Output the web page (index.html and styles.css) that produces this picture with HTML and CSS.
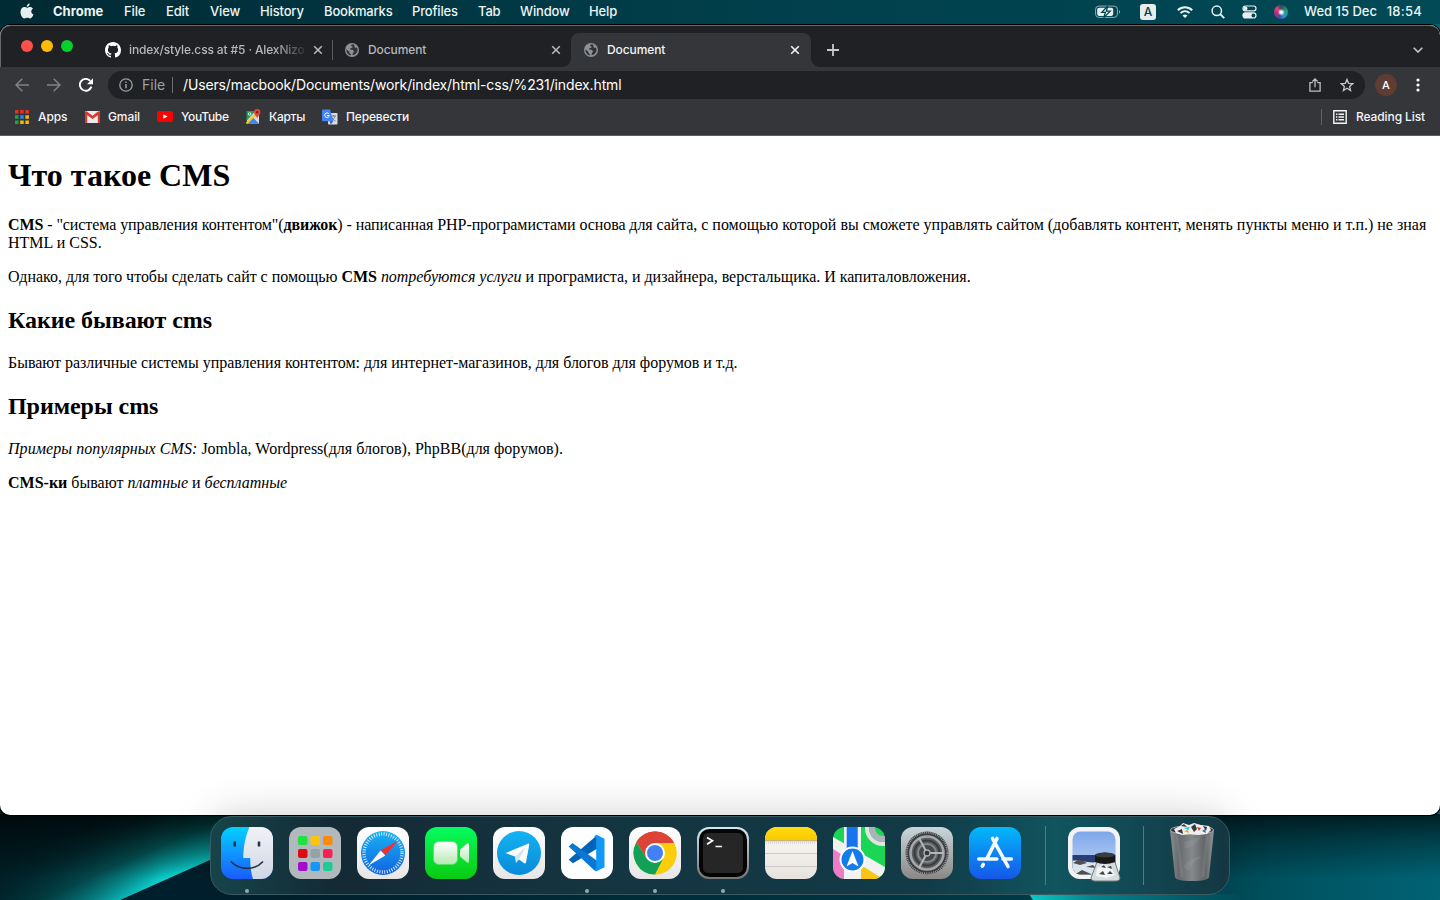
FILE: index.html
```html
<!DOCTYPE html>
<html lang="ru">
<head>
<meta charset="utf-8">
<title>Document</title>
<link rel="stylesheet" href="styles.css">
</head>
<body>
<svg width="0" height="0" class="defs">
  <defs>
    <linearGradient id="finderBlue" x1="0" y1="0" x2="0" y2="1"><stop offset="0" stop-color="#03d1fd"/><stop offset="1" stop-color="#1a5cff"/></linearGradient>
    <linearGradient id="finderWhite" x1="0" y1="0" x2="0" y2="1"><stop offset="0" stop-color="#f1f2f6"/><stop offset="1" stop-color="#cfd7e5"/></linearGradient>
    <linearGradient id="white" x1="0" y1="0" x2="0" y2="1"><stop offset="0" stop-color="#fff"/><stop offset="1" stop-color="#e6e6e6"/></linearGradient>
    <linearGradient id="safari" x1="0" y1="0" x2="0" y2="1"><stop offset="0" stop-color="#18b2f4"/><stop offset="1" stop-color="#1362df"/></linearGradient>
    <linearGradient id="green" x1="0" y1="0" x2="0" y2="1"><stop offset="0" stop-color="#05fc5e"/><stop offset="1" stop-color="#0acb11"/></linearGradient>
    <linearGradient id="camera" x1="0" y1="0" x2="0" y2="1"><stop offset="0" stop-color="#fff"/><stop offset="1" stop-color="#b6e9b5"/></linearGradient>
    <linearGradient id="tg" x1="0" y1="0" x2="0" y2="1"><stop offset="0" stop-color="#12b4f2"/><stop offset="1" stop-color="#0a89d8"/></linearGradient>
    <linearGradient id="yellow" x1="0" y1="0" x2="0" y2="1"><stop offset="0" stop-color="#ffdc10"/><stop offset="1" stop-color="#fcc800"/></linearGradient>
    <linearGradient id="note" x1="0" y1="0" x2="0" y2="1"><stop offset="0" stop-color="#fbfaf8"/><stop offset="1" stop-color="#e7e2dd"/></linearGradient>
    <linearGradient id="rim" x1="0" y1="0" x2="0" y2="1"><stop offset="0" stop-color="#d3eaf0"/><stop offset="1" stop-color="#77736f"/></linearGradient>
    <linearGradient id="prefs" x1="0" y1="0" x2="0" y2="1"><stop offset="0" stop-color="#c8d6dc"/><stop offset="1" stop-color="#8b8885"/></linearGradient>
    <linearGradient id="store" x1="0" y1="0" x2="0" y2="1"><stop offset="0" stop-color="#03b8fb"/><stop offset="1" stop-color="#1656e8"/></linearGradient>
    <linearGradient id="sky" x1="0" y1="0" x2="0" y2="1"><stop offset="0" stop-color="#76a2e8"/><stop offset="1" stop-color="#c9dcf8"/></linearGradient>
    <linearGradient id="can" x1="0" y1="0" x2="1" y2="0"><stop offset="0" stop-color="#8b8f91"/><stop offset=".2" stop-color="#666a6c"/><stop offset=".5" stop-color="#85898b"/><stop offset=".8" stop-color="#616567"/><stop offset="1" stop-color="#94989a"/></linearGradient>
    <linearGradient id="glow" gradientUnits="userSpaceOnUse" x1="165" y1="80" x2="132" y2="5"><stop offset="0" stop-color="#0bd4d4"/><stop offset=".14" stop-color="#08a9a9"/><stop offset=".4" stop-color="#045f61"/><stop offset=".75" stop-color="#013338"/><stop offset="1" stop-color="#00222a"/></linearGradient>
    <linearGradient id="leftDark" gradientUnits="userSpaceOnUse" x1="0" y1="0" x2="200" y2="0"><stop offset="0" stop-color="#001b22" stop-opacity=".75"/><stop offset=".8" stop-color="#001b22" stop-opacity="0"/></linearGradient>
    <linearGradient id="floor" x1="0" y1="0" x2="1" y2="0"><stop offset="0" stop-color="#001d2b"/><stop offset=".15" stop-color="#00202e"/><stop offset=".7" stop-color="#003f4c"/><stop offset=".85" stop-color="#004a57"/><stop offset="1" stop-color="#016374"/></linearGradient>
    <linearGradient id="wedge" x1="0" y1="0" x2="1" y2="0"><stop offset="0" stop-color="#0be0dd"/><stop offset=".3" stop-color="#07909a"/><stop offset="1" stop-color="#004d5a"/></linearGradient>
    <linearGradient id="shade" x1="0" y1="0" x2="0" y2="1"><stop offset="0" stop-color="#000" stop-opacity=".68"/><stop offset=".3" stop-color="#000" stop-opacity=".36"/><stop offset=".75" stop-color="#000" stop-opacity="0"/></linearGradient>
    <clipPath id="tile"><rect width="52" height="52" rx="12"/></clipPath>
    <symbol id="globe" viewBox="0 0 14 14"><circle cx="7" cy="7" r="7" fill="#8b9196"/><path d="M6.800 1.200 5.900 3l1.700.5-.2 1.300-2 .5-.3 1.300 2.400.2 1.800 1.700-1 .8-.9 2.800C10.200 12 12.500 9.900 12.500 7c0-.8-.2-1.600-.6-2.400l-1.500.3-1.200-1.600.2-1.500zM1.300 6.300c-.1 3 1.700 5.600 4.400 6.200l.2-1.400-1.700-1.200.2-1.200z" fill="#303236"/></symbol>
    <symbol id="cross" viewBox="0 0 10 10"><path d="M1.200 1.200 8.800 8.800M8.800 1.200 1.200 8.800" stroke="currentColor" stroke-width="1.600"/></symbol>
  </defs>
</svg>

<div class="desktop">
  <svg class="wallpaper" viewBox="0 0 1440 100" width="1440" height="100">
    <rect width="1440" height="100" fill="url(#floor)"/>
    <path d="M0 0H345L120 100H0z" fill="url(#glow)"/>
    <path d="M0 0H345L120 100H0z" fill="url(#leftDark)"/>
    <path d="M1029 94H1240V100H1033z" fill="url(#wedge)"/>
    <rect y="14" width="1440" height="86" fill="url(#shade)"/>
  </svg>

  <header class="menubar">
    <svg class="apple" width="14" height="17" viewBox="0 0 14 17"><path fill="#e8eeef" d="M9.700.6c.1 1.700-1.300 3.300-2.900 3.200C6.600 2.300 8 .8 9.700.6zM7 4.800c.7 0 1.600-.8 3-.8 1.200 0 2.300.6 3 1.500-2.500 1.500-2.100 4.900.5 5.900-.6 1.600-1.900 4-3.300 4-1.100 0-1.500-.7-2.900-.7s-1.900.7-2.900.7C2.600 15.400.5 12 .5 8.900.5 5.900 2.400 4.100 4.400 4.100c1.200 0 2 .7 2.600.7z"/></svg>
    <nav class="menus">
      <span class="app">Chrome</span><span>File</span><span>Edit</span><span>View</span><span>History</span><span>Bookmarks</span><span>Profiles</span><span>Tab</span><span>Window</span><span>Help</span>
    </nav>
    <div class="status">
      <svg width="26" height="14" viewBox="0 0 26 14"><rect x=".6" y="1.100" width="21.800" height="11.300" rx="3.200" fill="none" stroke="#8faeb4"/><rect x="2.200" y="2.700" width="16" height="8.200" rx="1.800" fill="#e8eeef"/><path d="M12.800 1 6.800 7.400h3.600L8.800 12.600l6.400-6.500h-3.800z" fill="#e8eeef" stroke="#024652" stroke-width="1.300"/><path d="M24 5v3.600c1.400-.5 1.400-3.100 0-3.600z" fill="#8faeb4"/></svg>
      <span class="lang">A</span>
      <svg width="16" height="12" viewBox="0 0 16 12" fill="none" stroke="#edf2f3" stroke-width="2"><path d="M.8 4.200C4.900.2 11.100.2 15.200 4.200M3.500 7.100c2.600-2.500 6.400-2.500 9 0"/><path d="M8 12 5.500 9.400c1.400-1.300 3.600-1.300 5 0z" fill="#edf2f3" stroke="none"/></svg>
      <svg width="14" height="14" viewBox="0 0 14 14" fill="none" stroke="#edf2f3" stroke-width="1.500"><circle cx="5.800" cy="5.800" r="4.700"/><path d="m9.200 9.200 4 4" stroke-width="1.900"/></svg>
      <svg width="15" height="14" viewBox="0 0 15 14"><rect x="1" y="1" width="13" height="4.800" rx="2.400" fill="none" stroke="#e8eeef" stroke-width="1.200"/><circle cx="3.500" cy="3.400" r="2" fill="#e8eeef"/><rect x=".4" y="7.300" width="14.200" height="6.300" rx="3.100" fill="#e8eeef"/><circle cx="11.400" cy="10.500" r="1.900" fill="#024652"/></svg>
      <span class="siri"></span>
      <span class="clock"><span>Wed 15 Dec</span><span class="time">18:54</span></span>
    </div>
  </header>

  <section class="window">
    <div class="tabs">
      <div class="lights"><i class="red"></i><i class="amber"></i><i class="lime"></i></div>
      <div class="tab first">
        <svg width="16" height="16" viewBox="0 0 16 16"><path fill="#fff" d="M8 0C3.580 0 0 3.580 0 8c0 3.540 2.290 6.530 5.470 7.590.4.070.55-.17.55-.38 0-.19-.01-.82-.01-1.490-2.010.37-2.530-.49-2.690-.94-.09-.23-.48-.94-.82-1.130-.28-.15-.68-.52-.01-.53.63-.01 1.080.58 1.230.82.72 1.210 1.870.87 2.330.66.07-.52.28-.87.51-1.070-1.780-.2-3.640-.89-3.640-3.950 0-.87.31-1.590.82-2.150-.08-.2-.36-1.020.08-2.120 0 0 .67-.21 2.200.82a7.600 7.600 0 0 1 4 0c1.530-1.040 2.200-.82 2.200-.82.44 1.100.16 1.920.08 2.120.51.56.82 1.270.82 2.150 0 3.070-1.870 3.750-3.650 3.950.29.25.54.73.54 1.480 0 1.070-.01 1.930-.01 2.200 0 .21.150.46.550.38A8.010 8.010 0 0 0 16 8c0-4.420-3.580-8-8-8z"/></svg>
        <span class="title fade">index/style.css at #5 · AlexNizo</span>
        <svg class="close" width="10" height="10"><use href="#cross"/></svg>
      </div>
      <div class="tab second">
        <svg width="14" height="14"><use href="#globe"/></svg>
        <span class="title">Document</span>
        <svg class="close" width="10" height="10"><use href="#cross"/></svg>
      </div>
      <div class="tab active">
        <svg width="14" height="14"><use href="#globe"/></svg>
        <span class="title">Document</span>
        <svg class="close" width="10" height="10"><use href="#cross"/></svg>
      </div>
      <svg class="plus" width="12" height="12" viewBox="0 0 12 12"><path d="M6 0v12M0 6h12" stroke="#c8cacd" stroke-width="1.800"/></svg>
      <svg class="chevron" width="10" height="6" viewBox="0 0 10 6"><path d="m.7.700 4.300 4.300L9.300.7" fill="none" stroke="#c4c7ca" stroke-width="1.600"/></svg>
    </div>

    <div class="toolbar">
      <svg width="14" height="14" viewBox="0 0 14 14" fill="none" stroke="#7f8286" stroke-width="1.500"><path d="M14 7H1M7.300.700 1 7l6.300 6.300"/></svg>
      <svg width="14" height="14" viewBox="0 0 14 14" fill="none" stroke="#7f8286" stroke-width="1.500"><path d="M0 7h13M6.700.700 13 7l-6.300 6.300"/></svg>
      <svg width="14" height="14" viewBox="0 0 14 14"><path d="M12.400 8.600A5.900 5.900 0 1 1 11.200 2.900" fill="none" stroke="#fff" stroke-width="1.900"/><path d="M14 .2v6H8z" fill="#fff"/></svg>
      <div class="omnibox">
        <svg width="14" height="14" viewBox="0 0 14 14"><circle cx="7" cy="7" r="6.200" fill="none" stroke="#9aa0a6" stroke-width="1.300"/><path d="M7 6v4.300M7 3.400v1.500" stroke="#9aa0a6" stroke-width="1.500"/></svg>
        <span class="scheme">File</span>
        <span class="url">/Users/macbook/Documents/work/index/html-css/%231/index.html</span>
        <svg class="share" width="12" height="14" viewBox="0 0 12 14" fill="none" stroke="#bcbfc2" stroke-width="1.300"><path d="M3.800 4.700H.9v8.500h10.200V4.700H8.200M6 9.200V1M3.400 3.500 6 .9l2.600 2.600"/></svg>
        <svg width="14" height="14" viewBox="0 0 14 14" fill="none" stroke="#c3c5c8" stroke-width="1.300"><path d="m7 1.400 1.600 3.900 4.200.3-3.200 2.800 1 4.100L7 10.300l-3.600 2.200 1-4.100L1.200 5.600l4.200-.3z"/></svg>
      </div>
      <span class="avatar">A</span>
      <svg width="4" height="14" viewBox="0 0 4 14" fill="#fff"><circle cx="2" cy="2" r="1.600"/><circle cx="2" cy="7" r="1.600"/><circle cx="2" cy="12" r="1.600"/></svg>
    </div>

    <div class="bookmarks">
      <svg width="14" height="14" viewBox="0 0 14 14"><path d="M0 0h3.500v3.500H0zM5.200 0h3.500v3.500H5.200zM10.400 0h3.500v3.500h-3.500z" fill="#ea3023"/><path d="M0 5.200h3.500v3.500H0z" fill="#1ea446"/><path d="M5.200 5.200h3.500v3.500H5.200z" fill="#2d85f0"/><path d="M10.400 5.200h3.500v3.500h-3.500z" fill="#f9b90c"/><path d="M0 10.400h3.500v3.500H0z" fill="#1ea446"/><path d="M5.200 10.400h3.500v3.500H5.200zM10.400 10.400h3.500v3.500h-3.500z" fill="#f9b90c"/></svg>
      <span class="apps">Apps</span>
      <svg width="15" height="12" viewBox="0 0 15 12"><rect width="15" height="12" rx="1.300" fill="#ececec"/><path d="M0 1.200V11q0 1 1 1h1.200V4.200L7.500 8l5.300-3.800V12H14q1 0 1-1V1.200Q14.300-.4 13 .4L7.500 4.800 2 .4Q.700-.4 0 1.200z" fill="#db3a30"/></svg>
      <span class="gmail">Gmail</span>
      <svg width="16" height="11" viewBox="0 0 16 11"><rect width="16" height="11" rx="2.600" fill="#f00"/><path d="m6.300 3.200 4.300 2.300-4.300 2.300z" fill="#fff"/></svg>
      <span class="youtube">YouTube</span>
      <svg width="15" height="15" viewBox="0 0 15 15"><path d="M1 2h12v12.500H1z" fill="#ddd"/><path d="M.5 2h9L.5 12z" fill="#1d9d58"/><path d="m7 8.500 6 6H1z" fill="#4285f4"/><path d="m9 6-8.500 8.500" stroke="#fbc62d" stroke-width="2"/><path d="M11.200 9.800C10.900 7.200 8 6.200 8 3.300a3.200 3.200 0 0 1 6.400 0c0 2.900-2.900 3.900-3.200 6.500z" fill="#e84335"/><circle cx="11.200" cy="3.300" r="1.200" fill="#7c1d16"/><circle cx="3.600" cy="5" r="1.300" fill="none" stroke="#fff" stroke-width=".8"/></svg>
      <span class="maps">Карты</span>
      <svg width="16" height="16" viewBox="0 0 16 16"><rect x="6" y="4" width="9.500" height="11.500" rx="1" fill="#dadce0"/><path d="M9 7h5M11.500 6v1M13 7c-.5 2-1.800 3.800-4 5M10 8.500c.7 1.700 2 3 3.500 3.500" fill="none" stroke="#68818c" stroke-width="1"/><path d="M1 .5h7l3.400 11.800H1q-1 0-1-1V1.500q0-1 1-1z" fill="#4285f4"/><path d="m7.500 12.300 1.200 3 2.700-3z" fill="#3550bd"/><path d="M6.800 4.700a2.300 2.300 0 1 0 .5 1.800H5.200" fill="none" stroke="#fff" stroke-width="1"/></svg>
      <span class="translate">Перевести</span>
      <i class="rule"></i>
      <svg width="14" height="14" viewBox="0 0 14 14" fill="none" stroke="#f4f4f4" stroke-width="1.400"><path d="M.8.800h12.400v12.400H.8zM5.500 4.200H11M5.500 7H11M5.500 9.800H11M3 4.200h1.400M3 7h1.400M3 9.800h1.400"/></svg>
      <span class="reading">Reading List</span>
    </div>

    <main class="page">
      <h1>Что такое CMS</h1>
      <p><span class="tight"><b>CMS</b> - "система управления контентом"(<b>движок</b>) - написанная PHP-програмистами основа для сайта,</span> с помощью которой вы сможете управлять сайтом (добавлять контент, менять пункты меню и т.п.) не зная HTML и CSS.</p>
      <p class="snug">Однако, для того чтобы сделать сайт с помощью <b>CMS</b> <i>потребуются услуги</i> и програмиста, и дизайнера, верстальщика. И капиталовложения.</p>
      <h2>Какие бывают cms</h2>
      <p class="snug">Бывают различные системы управления контентом: для интернет-магазинов, для блогов для форумов и т.д.</p>
      <h2>Примеры cms</h2>
      <p><i class="wide">Примеры популярных CMS:</i> Jombla, Wordpress(для блогов), PhpBB(для форумов).</p>
      <p><b>CMS-ки</b> бывают <i>платные</i> и <i>бесплатные</i></p>
    </main>
  </section>

  <footer class="dock">
    <div class="icon running"><svg viewBox="0 0 52 52"><g clip-path="url(#tile)"><rect width="52" height="52" fill="url(#finderBlue)"/><path d="M28.500 0C24.500 9 22.500 19 22.200 31h7c0 8 .8 15 2.800 21h20V0z" fill="url(#finderWhite)"/></g><path d="M13.700 14.500v5M38 14.500v5" stroke="#26333c" stroke-width="2.500"/><path d="M10.500 35c8 8.500 23 8.500 31 0" fill="none" stroke="#26333c" stroke-width="1.700" stroke-linecap="round"/></svg></div>
    <div class="icon"><svg viewBox="0 0 52 52"><rect width="52" height="52" rx="12" fill="#b1b9bc"/><g><rect x="9" y="9" width="9.500" height="9" rx="2" fill="#1de33c"/><rect x="21.500" y="9" width="9.500" height="9" rx="2" fill="#fcc40c"/><rect x="34" y="9" width="9.500" height="9" rx="2" fill="#fb890c"/><rect x="9" y="22" width="9.500" height="9" rx="2" fill="#dc0b14"/><rect x="21.500" y="22" width="9.500" height="9" rx="2" fill="#96a2a8"/><rect x="34" y="22" width="9.500" height="9" rx="2" fill="#f62255"/><rect x="9" y="35" width="9.500" height="9" rx="2" fill="#a30ccb"/><rect x="21.500" y="35" width="9.500" height="9" rx="2" fill="#1597fa"/><rect x="34" y="35" width="9.500" height="9" rx="2" fill="#20cb92"/></g></svg></div>
    <div class="icon"><svg viewBox="0 0 52 52"><rect width="52" height="52" rx="12" fill="url(#white)"/><circle cx="26" cy="26" r="22" fill="url(#safari)"/><circle cx="26" cy="26" r="19" fill="none" stroke="#e2f1fb" stroke-width="3.400" stroke-dasharray=".9 1.590"/><path d="M41 13.500 23.600 23.600 28.400 28.400z" fill="#f32f2c"/><path d="M11.500 38.500 23.600 23.600 28.400 28.400z" fill="#f5f6f8"/></svg></div>
    <div class="icon"><svg viewBox="0 0 52 52"><rect width="52" height="52" rx="12" fill="url(#green)"/><rect x="8.500" y="14.500" width="24" height="23" rx="5.500" fill="url(#camera)" stroke="#5fda68" stroke-width=".7"/><path d="M35 22.500 42 16.500q2-1 2 1v17q0 2-2 1l-7-6z" fill="url(#camera)"/></svg></div>
    <div class="icon"><svg viewBox="0 0 52 52"><rect width="52" height="52" rx="12" fill="url(#white)"/><circle cx="26" cy="26" r="22" fill="url(#tg)"/><path d="M12.500 26 35 16.700q1.400-.4 1.200 1.200L33 35.200q-.5 1.900-2.200.8L22 29.500z" fill="#fff"/><path d="m33 19.500-11.200 10L23 36l3-3.600z" fill="#d3e5ee"/></svg></div>
    <div class="icon running"><svg viewBox="0 0 52 52"><rect width="52" height="52" rx="12" fill="#fff"/><path d="M36.300 8v13.500L12 36.200 7.700 32.700z" fill="#0065b8"/><path d="M7.700 19.500 11.500 16 36.300 34v10L33 43z" fill="#0878d3"/><path d="m35.500 7.800 8 4v28.500l-8 4q-1.400.2-2.300-1l2-1V10.500l-2.200-1z" fill="#1198f5"/></svg></div>
    <div class="icon running"><svg viewBox="0 0 52 52"><rect width="52" height="52" rx="12" fill="url(#white)"/><circle cx="26" cy="26" r="21.500" fill="#f9ce16"/><path d="M26 26 7.400 15.300A21.500 21.500 0 0 1 44.600 15.300z" fill="#db4437"/><path d="M26 16H45.100A21.500 21.500 0 0 0 7.400 15.300L17.300 31z" fill="#db4437"/><path d="M7.400 15.300 17.300 31 26 36 34.600 31 26.300 47.500A21.500 21.500 0 0 1 7.400 15.300z" fill="#10a157"/><path d="M34.700 31 26 47.500A21.500 21.500 0 0 0 45.100 16H26z" fill="#fccd0a"/><circle cx="26" cy="26" r="10" fill="#fff"/><circle cx="26" cy="26" r="8" fill="#4381f3"/></svg></div>
    <div class="icon running"><svg viewBox="0 0 52 52"><rect width="52" height="52" rx="12" fill="url(#rim)"/><rect x="2" y="2" width="48" height="48" rx="10.500" fill="#050505"/><rect x="6" y="6" width="40" height="40" rx="5" fill="#262626"/><path d="m10 10.500 5.500 3.300-5.500 3.500M18.500 19.500H25" fill="none" stroke="#fff" stroke-width="1.700"/></svg></div>
    <div class="icon"><svg viewBox="0 0 52 52"><g clip-path="url(#tile)"><rect width="52" height="52" fill="url(#note)"/><rect width="52" height="13.500" fill="url(#yellow)"/></g><path d="M0 13.800h52" stroke="#9d9575" stroke-width=".8"/><path d="M1 16h50" stroke="#c2beb9" stroke-width="1.200" stroke-dasharray="1 1"/><path d="M0 26.500h52M0 39.500h52" stroke="#cfcbc7"/></svg></div>
    <div class="icon"><svg viewBox="0 0 52 52"><g clip-path="url(#tile)"><rect width="52" height="52" fill="#1bd655"/><path d="M0 20 20 34V52H0z" fill="#f07bc6"/><path d="m20 34 30 18H20z" fill="#fac516"/><path d="M0 10 52 40v14L0 22z" fill="#f0f1f0"/><path d="M28 38 50 52H28z" fill="#fac516"/><path d="M11 0h17v52H11z" fill="#f1f2f3"/><path d="M13.700 0h11v32h-11z" fill="#1675ee"/><circle cx="50" cy="1" r="16" fill="none" stroke="#e1e4e5" stroke-width="4"/><circle cx="50" cy="1" r="11" fill="none" stroke="#a9b5b5" stroke-width="6"/></g><circle cx="19.500" cy="32.500" r="12" fill="#147bea" stroke="#fff" stroke-width="2"/><path d="m19.500 24 6 15.500-6-3.500-6 3.500z" fill="#fff"/></svg></div>
    <div class="icon"><svg viewBox="0 0 52 52"><rect width="52" height="52" rx="12" fill="url(#prefs)"/><circle cx="26" cy="26" r="21.500" fill="#3b3d3f"/><circle cx="26" cy="26" r="20.500" fill="none" stroke="#a0a2a3" stroke-width="2" stroke-dasharray=".9 1"/><circle cx="26" cy="26" r="16.500" fill="#5b5e60" stroke="#a4a8aa" stroke-width="2.600"/><circle cx="26" cy="26" r="12.500" fill="none" stroke="#393b3d" stroke-width="2"/><circle cx="26" cy="26" r="9" fill="#46494b" stroke="#85898b" stroke-width="2"/><path d="M26 26h17M26 26l-8-15M26 26l-8 15" stroke="#b3b6b7" stroke-width="2"/><circle cx="26" cy="26" r="3" fill="#343638" stroke="#abafb1" stroke-width="1.300"/></svg></div>
    <div class="icon"><svg viewBox="0 0 52 52"><rect width="52" height="52" rx="12" fill="url(#store)"/><g fill="none" stroke="#f6faff" stroke-width="3.600" stroke-linecap="round"><path d="M28 11.500 18 31.500M14.300 37.500l-1 1.700M23.500 11.500 39 39.500M9.800 32h18M34 32h8.300"/></g></svg></div>
    <i class="divider"></i>
    <div class="icon preview"><svg viewBox="0 0 55 56" width="55" height="56"><rect width="52" height="52" rx="12" fill="#f3f3f3"/><clipPath id="photo"><rect x="4.500" y="4.500" width="43" height="43" rx="8"/></clipPath><g clip-path="url(#photo)"><rect width="52" height="52" fill="url(#sky)"/><path d="M0 28h52v20H0z" fill="#293d76"/><path d="M0 35c10-4 17 2 30 0v15H0z" fill="#d9e5ee"/><path d="M5 36l5-3 5 1 4 2-7 2zM6 48l8-5 9 4v4zM18 40l7-2 3 3z" fill="#554f4b"/></g><path d="M29 35h18l5 16q0 3-4 3H27q-4 0-4-3z" fill="#d5dcdd" stroke="#777d7e"/><path d="M29 41l6-4 8 3 4 8-8 3-11-2z" fill="#f4f4f4"/><path d="m33 40 3-2 2 3zM39 40l4-1 1 3zM31 47l4-3 2 4zM39 47l3-3 3 3z" fill="#38424e"/><path d="M27 28q10-5 20 0v7q-10 4-20 0z" fill="#171919"/><ellipse cx="37" cy="28" rx="10" ry="2.500" fill="#393c3d"/></svg></div>
    <i class="divider"></i>
    <div class="trash"><svg viewBox="0 0 46 60" width="46" height="60"><path d="M1 8h44l-5 47q-1 4-17 4T6 55z" fill="url(#can)"/><path d="M8 13l5 42M38 13l-4 42" stroke="#a3a7a9" stroke-opacity=".2" stroke-width="3"/><path d="M15 20q10-2 18-7-6 12-17 14zM14 45q10-12 19-10-9 3-13 14z" fill="#b0b4b5" fill-opacity=".18"/><ellipse cx="23" cy="8" rx="21.500" ry="4.500" fill="#303536" stroke="#a5a9aa"/><path d="M5 7l6-3 3-3 6 2 5-2 7 2 8 1 2 4-4 4-9 1-8-1-8 1-6-2z" fill="#eee"/><path d="m12 4 3-2 3 3zM22 5l4-3 2 5-3 3zM34 4l4 1-1 4zM8 9l5-2 1 5z" fill="#343a3d"/><path d="m15 6 6-1-2 3z" fill="#23c4de"/><path d="m28 5 4 1-2 3z" fill="#d23d2c"/><path d="m33 9 3-2 1 4z" fill="#376dbc"/><path d="m15 9 4-1 1 3z" fill="#e0a734"/></svg></div>
  </footer>
</div>
</body>
</html>
```
FILE: styles.css
```css
* { box-sizing: border-box; }
html, body { margin: 0; height: 100%; overflow: hidden; }
svg { display: block; flex: none; }
.defs { position: absolute; }
.desktop {
  position: relative;
  width: 1440px;
  height: 900px;
  overflow: hidden;
  background: linear-gradient(90deg, #003039, #00505d 70%, #016374);
  font-family: Inter, "Liberation Sans", sans-serif;
}
.wallpaper { position: absolute; left: 0; bottom: 0; }

.menubar {
  position: relative;
  display: flex;
  align-items: center;
  height: 24px;
  padding: 0 18px 0 20px;
  background: linear-gradient(90deg, #002a34, #003d49 45%, #014a56);
  color: #edf3f4;
  font-size: 13px;
  font-weight: 500;
  line-height: 22px;
}
.apple { margin-top: -2px; }
.menus {
  display: grid;
  grid-template-columns: 71px 42px 44px 50px 64px 88px 66px 42px 69px 40px;
  margin: -2px 0 0 19px;
  white-space: nowrap;
  letter-spacing: -.15px;
}
.app { font-weight: 700; letter-spacing: 0; }
.status { display: flex; align-items: center; margin-left: auto; }
.lang {
  width: 16px;
  height: 16px;
  margin: 0 21px 0 19px;
  border-radius: 3px;
  background: #e5edee;
  color: #023d48;
  font-size: 12px;
  line-height: 16px;
  text-align: center;
}
.status svg:nth-of-type(2) { margin-right: 18px; }
.status svg:nth-of-type(3) { margin-right: 17px; }
.siri {
  width: 14px;
  height: 14px;
  margin: 0 16px 0 17px;
  border-radius: 50%;
  background: radial-gradient(circle at 52% 52%, #fff 0 8%, transparent 35%), conic-gradient(#35485f, #1e9b7c 70deg, #2898ce 150deg, #3b4db0 190deg, #bb2c78 260deg, #ef3c7d 310deg, #35485f);
}
.clock { display: flex; justify-content: space-between; width: 118px; margin-top: -2px; white-space: nowrap; }
.time { letter-spacing: .25px; }

.window {
  position: relative;
  display: flex;
  flex-direction: column;
  height: 790px;
  margin-top: 1px;
  border-radius: 10px;
  overflow: hidden;
  background: #fff;
  box-shadow: 0 0 0 1px #000;
}
.tabs {
  display: flex;
  align-items: center;
  height: 42px;
  padding: 7px 17px 0 21px;
  border: 1px solid #68696b;
  border-width: 1px 0 0 1px;
  border-radius: 10px 10px 0 0;
  background: #202124;
  color: #b5b8bc;
  font-size: 12px;
  font-weight: 500;
}
.lights { display: flex; gap: 8px; margin: -8px 32px 0 -1px; }
.lights i { width: 12px; height: 12px; border-radius: 50%; }
.red { background: #ff5149; }
.amber { background: #fdbb05; }
.lime { background: #05cf2e; }
.tab { display: flex; align-items: center; height: 34px; padding-bottom: 1px; }
.title { flex: 1; margin-left: 9px; white-space: nowrap; letter-spacing: -.1px; }
.first { width: 228px; padding-right: 10px; }
.first .title { width: 175px; flex: none; margin-left: 8px; margin-right: 9px; letter-spacing: -.14px; }
.fade { -webkit-mask-image: linear-gradient(90deg, #000 145px, transparent 180px); mask-image: linear-gradient(90deg, #000 145px, transparent 180px); }
.first::after { content: ""; flex: none; width: 1px; height: 20px; margin-left: 9px; margin-right: -10px; background: #5a5c60; }
.second { width: 238px; padding-left: 12px; padding-right: 10px; }
.active {
  position: relative;
  width: 240px;
  padding-left: 13px;
  padding-right: 11px;
  border-radius: 8px 8px 0 0;
  background: #35363a;
  color: #f3f4f5;
}
.active::before, .active::after {
  content: "";
  position: absolute;
  bottom: 0;
  width: 8px;
  height: 8px;
}
.active::before { right: 100%; background: radial-gradient(circle at 0 0, transparent 7.5px, #35363a 8px); }
.active::after { left: 100%; background: radial-gradient(circle at 100% 0, transparent 7.5px, #35363a 8px); }
.plus { margin: 0 0 1px 16px; }
.chevron { margin-left: auto; }

.toolbar {
  display: flex;
  align-items: center;
  gap: 18px;
  height: 36px;
  padding: 0 20px 0 15px;
  background: #35363a;
}
.omnibox {
  display: flex;
  flex: 1;
  align-items: center;
  height: 28px;
  margin: 0 -7px 0 -3px;
  padding: 0 11px;
  border-radius: 14px;
  background: #202124;
  font-size: 14px;
}
.scheme {
  width: 31px;
  height: 16px;
  margin: 0 1px 0 9px;
  border-right: 1px solid #6b6e72;
  color: #9aa0a6;
  line-height: 16px;
}
.url { margin: -2px 0 0 9px; color: #fff; white-space: nowrap; letter-spacing: -.135px; }
.share { margin: 0 19px 0 auto; }
.avatar {
  width: 22px;
  height: 22px;
  margin-left: -1px;
  border-radius: 50%;
  background: #603d32;
  color: #fff;
  font-size: 11px;
  font-weight: 500;
  line-height: 22px;
  text-align: center;
}
.avatar + svg { margin-left: 1px; }

.bookmarks {
  display: flex;
  align-items: center;
  height: 33px;
  padding: 0 14px 5px 15px;
  border-bottom: 1px solid #5c5d60;
  background: #35363a;
  color: #f4f5f6;
  font-size: 12px;
  font-weight: 500;
  letter-spacing: -.1px;
  white-space: nowrap;
}
.bookmarks span { margin: -1px 0 0 8px; }
.bookmarks .apps { width: 47px; margin-left: 9px; }
.bookmarks .gmail { width: 49px; }
.bookmarks .youtube { width: 65px; letter-spacing: -.3px; }
.bookmarks .maps { width: 53px; letter-spacing: -.3px; }
.bookmarks .translate { letter-spacing: -.15px; }
.rule { width: 1px; height: 16px; margin: 0 11px 0 auto; background: #606266; }
.bookmarks .reading { width: 70px; margin-left: 9px; }

.page {
  flex: 1;
  padding: 0 8px;
  color: #000;
  font: 16px "Liberation Serif", "Times New Roman", serif;
}
.page h1 { margin: 21px 0 22px; font-size: 32px; line-height: 37px; }
.page h2 { margin: 21px 0 20px; font-size: 24px; line-height: 27px; letter-spacing: -.05px; }
.page p { margin: 16px 0; line-height: 18px; }
.tight { letter-spacing: -.085px; }
.page .snug { letter-spacing: -.025px; }
.wide { letter-spacing: .06px; }

.dock {
  position: absolute;
  left: 210px;
  top: 816px;
  display: flex;
  gap: 16px;
  width: 1020px;
  height: 79px;
  padding: 10px;
  border: 1px solid #3b5960;
  border-radius: 22px;
  background: linear-gradient(90deg, #16444a, #142a35 12%, #143440 35%, #123a47 70%, #10555f 83%, #114d58 88%, #143742);
  box-shadow: 0 0 40px rgba(0, 0, 0, .2);
}
.icon { position: relative; width: 52px; height: 52px; }
.running::after {
  content: "";
  position: absolute;
  left: 24px;
  top: 62px;
  width: 4px;
  height: 4px;
  border-radius: 50%;
  background: #91aab2;
}
.divider { width: 1px; height: 59px; margin: -1px 6px 0 8px; background: #4b7e88; }
.preview + .divider { margin: -1px 9px 0 7px; }
.trash { margin-top: -5px; }
```
